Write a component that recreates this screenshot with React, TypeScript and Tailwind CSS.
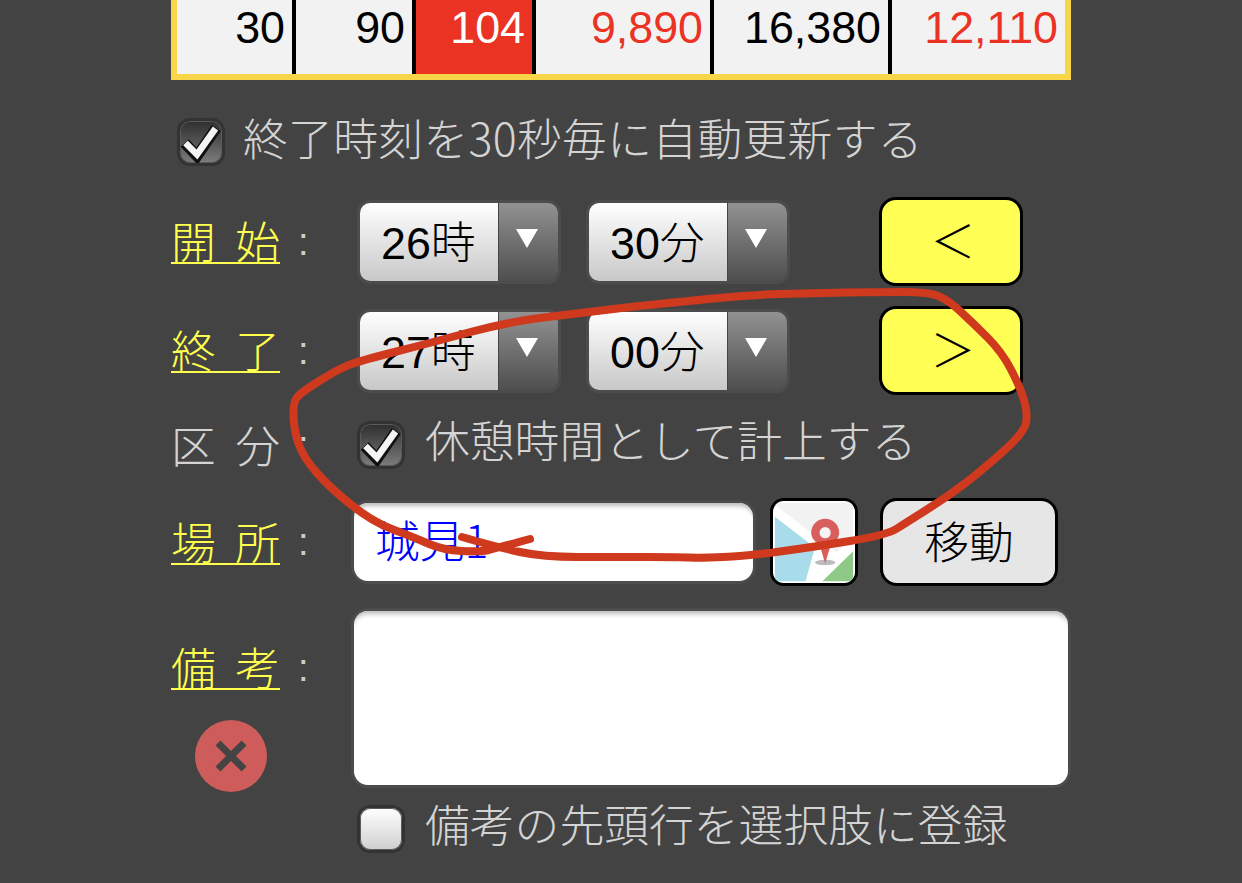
const cells = [
  { w: 'w-[119px]', text: '30' },
  { w: 'w-[120px]', text: '90' },
  { w: 'w-[120px]', text: '104', bg: 'bg-[#ea3323]', color: 'text-white' },
  { w: 'w-[178px]', text: '9,890', color: 'text-[#ea3323]' },
  { w: 'w-[178px]', text: '16,380' },
  { w: 'w-[173px]', text: '12,110', color: 'text-[#ea3323]', last: true },
]

const inkLine = '[font-family:"Liberation_Sans","Noto_Sans_CJK_JP",sans-serif]'
const lightLine = '[font-family:"Noto_Sans_CJK_JP",sans-serif]'

// 手書きの線: 中点を通る二次曲線でならす
const stroke = [
  [530, 539], [497, 548], [480, 552], [443, 550], [413, 537], [373, 522], [330, 488], [303, 457], [294, 430],
  [293, 403], [300, 393], [340, 368], [363, 360], [430, 343], [507, 322], [580, 313], [647, 305], [680, 302],
  [747, 295], [813, 293], [880, 292], [927, 292], [947, 299], [973, 323], [1002, 352], [1020, 387], [1028, 413],
  [1024, 433], [980, 472], [947, 497], [907, 522], [887, 535], [813, 547], [747, 556], [700, 558], [680, 557],
  [613, 557], [543, 557], [497, 547], [462, 537],
]

function smooth(pts: number[][]) {
  let d = `M${pts[0][0]} ${pts[0][1]}`
  for (let i = 1; i < pts.length - 1; i++) {
    const mx = (pts[i][0] + pts[i + 1][0]) / 2
    const my = (pts[i][1] + pts[i + 1][1]) / 2
    d += `Q${pts[i][0]} ${pts[i][1]} ${mx} ${my}`
  }
  const end = pts[pts.length - 1]
  return d + `L${end[0]} ${end[1]}`
}

function Label({ text, link = true }: { text: string; link?: boolean }) {
  return (
    <div className="flex w-[183px] shrink-0 items-center">
      <span
        className={
          'mt-[3px] w-[127px] shrink-0 leading-[50px] [word-spacing:7px] ' +
          (link ? 'text-[#ffff4d] underline decoration-2 underline-offset-[3px]' : 'text-[#d4d4d4]')
        }
      >
        {text}
      </span>
      <span className="text-[38px] leading-[50px] text-[#cccccc]">:</span>
    </div>
  )
}

function Checkbox({ checked = true, className = '' }: { checked?: boolean; className?: string }) {
  return (
    <div
      className={
        'h-[48px] w-[48px] shrink-0 rounded-[13px] border-[3px] border-[#333333] shadow-[0_0_0_1px_#5a5a5a_inset] ' +
        (checked ? 'bg-gradient-to-b from-[#2f2f2f] to-[#7d7d7d] ' : 'border-[#3c3c3c] bg-gradient-to-b from-[#ffffff] to-[#cfcfcf] ') +
        className
      }
    >
      {checked && (
        <svg viewBox="0 0 42 42" className="h-[42px] w-[42px]">
          <path d="M4.7 22L17 35L36.3 7" fill="none" stroke="#111111" strokeWidth="11" />
          <path d="M5.5 22L17 33.5L35.5 7.5" fill="none" stroke="#f4f4f4" strokeWidth="6.5" />
        </svg>
      )}
    </div>
  )
}

function Select({ value, className = '' }: { value: string; className?: string }) {
  return (
    <div className={'flex h-[78px] w-[198px] shrink-0 overflow-hidden rounded-[10px] shadow-[0_0_0_3px_#4c4c4c] ' + className}>
      <div className="flex w-[138px] items-center bg-gradient-to-b from-[#ffffff] to-[#c8c8c8] pl-[21px] pt-[4px] text-black">{value}</div>
      <div className="flex flex-1 justify-center border-l border-[#444444] bg-gradient-to-b from-[#929292] to-[#4f4f4f] pr-[3px] pt-[26px]">
        <div className="h-0 w-0 border-x-[11px] border-t-[19px] border-x-transparent border-t-white" />
      </div>
    </div>
  )
}

function ArrowButton({ text }: { text: string }) {
  return (
    <div className="ml-[92px] flex h-[89px] w-[144px] shrink-0 items-center justify-center rounded-[17px] border-[3px] border-black bg-[#ffff55] pl-[4px] pt-[2px] text-black">
      {text}
    </div>
  )
}

function MapIcon() {
  return (
    <svg viewBox="0 0 88 88" className="h-full w-full">
      <rect width="88" height="88" fill="#ffffff" />
      <path d="M2 2H86V39L68 55L2 4Z" fill="#f2f2f2" />
      <path d="M2 17L45 50L35 86H2Z" fill="#a8dcea" />
      <path d="M86 54L53 86H86Z" fill="#8ec987" />
      <ellipse cx="56" cy="66" rx="11" ry="3" fill="#bcbcbc" />
      <path d="M56 67L50 47C44 43 41 39 41 34A15 15 0 0 1 71 34C71 39 68 43 62 47Z" fill="#d95f5f" />
      <circle cx="56" cy="34" r="6" fill="#f4f4f4" />
    </svg>
  )
}

export default function App() {
  return (
    <div className={'relative h-[883px] overflow-hidden bg-[#434343] text-[44.8px] font-light ' + inkLine}>
      <div className="ml-[171px] w-[900px]">
        <div className="flex h-[80px] border-x-[6px] border-b-[6px] border-[#f8d648]">
          {cells.map((c) => (
            <div
              key={c.text}
              className={
                c.w + ' h-full pr-[7px] pt-[2px] text-right leading-[50px] ' +
                (c.last ? '' : 'border-r-4 border-black ') +
                (c.bg ?? 'bg-[#f2f2f2]') + ' ' + (c.color ?? 'text-black')
              }
            >
              {c.text}
            </div>
          ))}
        </div>

        <div className="mt-[38px] flex h-[48px] items-center pl-[6px] text-[#d4d4d4]">
          <Checkbox />
          <span className={'-mt-[11px] ml-[18px] whitespace-nowrap tracking-[0.3px] ' + lightLine}>終了時刻を30秒毎に自動更新する</span>
        </div>

        <div className="mt-[31px] flex h-[89px] items-center">
          <Label text="開 始" />
          <Select value="26時" className="ml-[6px]" />
          <Select value="30分" className="ml-[31px]" />
          <ArrowButton text="＜" />
        </div>

        <div className="mt-[20px] flex h-[89px] items-center">
          <Label text="終 了" />
          <Select value="27時" className="ml-[6px]" />
          <Select value="00分" className="ml-[31px]" />
          <ArrowButton text="＞" />
        </div>

        <div className="mt-[26px] flex h-[48px] items-center">
          <Label text="区 分" link={false} />
          <Checkbox className="ml-[3px]" />
          <span className="-mt-[5px] ml-[20px] whitespace-nowrap text-[#d4d4d4]">休憩時間として計上する</span>
        </div>

        <div className="mt-[29px] flex h-[88px] items-center">
          <Label text="場 所" />
          <input
            readOnly
            value="城見1"
            className={'h-[78px] w-[399px] rounded-[14px] bg-white pb-[8px] pl-[21px] text-[#0000ff] shadow-[0_0_0_3px_#4c4c4c,inset_0_6px_4px_-3px_#bbbbbb] outline-none ' + lightLine}
          />
          <div className="ml-[17px] h-[88px] w-[88px] shrink-0 overflow-hidden rounded-[14px] border-[3px] border-black">
            <MapIcon />
          </div>
          <div className="ml-[22px] flex h-[88px] w-[178px] items-center justify-center rounded-[17px] border-[3px] border-black bg-[#e6e6e6] pt-[4px] text-black">
            移動
          </div>
        </div>

        <div className="mt-[25px] flex h-[174px] items-start">
          <div className="w-[183px] shrink-0 pt-[30px]">
            <Label text="備 考" />
            <div className="ml-[24px] mt-[26px] flex h-[72px] w-[72px] items-center justify-center rounded-full bg-[#cd5c5a]">
              <svg viewBox="0 0 32 32" className="h-[32px] w-[32px]">
                <path d="M3 3L29 29M29 3L3 29" stroke="#444444" strokeWidth="7" />
              </svg>
            </div>
          </div>
          <textarea
            readOnly
            className="h-[174px] w-[714px] resize-none rounded-[14px] bg-white shadow-[0_0_0_3px_#4c4c4c,inset_0_7px_5px_-4px_#bbbbbb] outline-none"
          />
        </div>

        <div className="mt-[20px] flex h-[48px] items-center pl-[186px]">
          <Checkbox checked={false} />
          <span className="-mt-[5px] ml-[20px] whitespace-nowrap text-[#d4d4d4]">備考の先頭行を選択肢に登録</span>
        </div>
      </div>

      <svg viewBox="0 0 1242 883" className="pointer-events-none absolute left-0 top-0 h-[883px] w-[1242px]">
        <path d={smooth(stroke)} fill="none" stroke="#cf391e" strokeWidth="8" strokeLinecap="round" strokeLinejoin="round" />
      </svg>
    </div>
  )
}
